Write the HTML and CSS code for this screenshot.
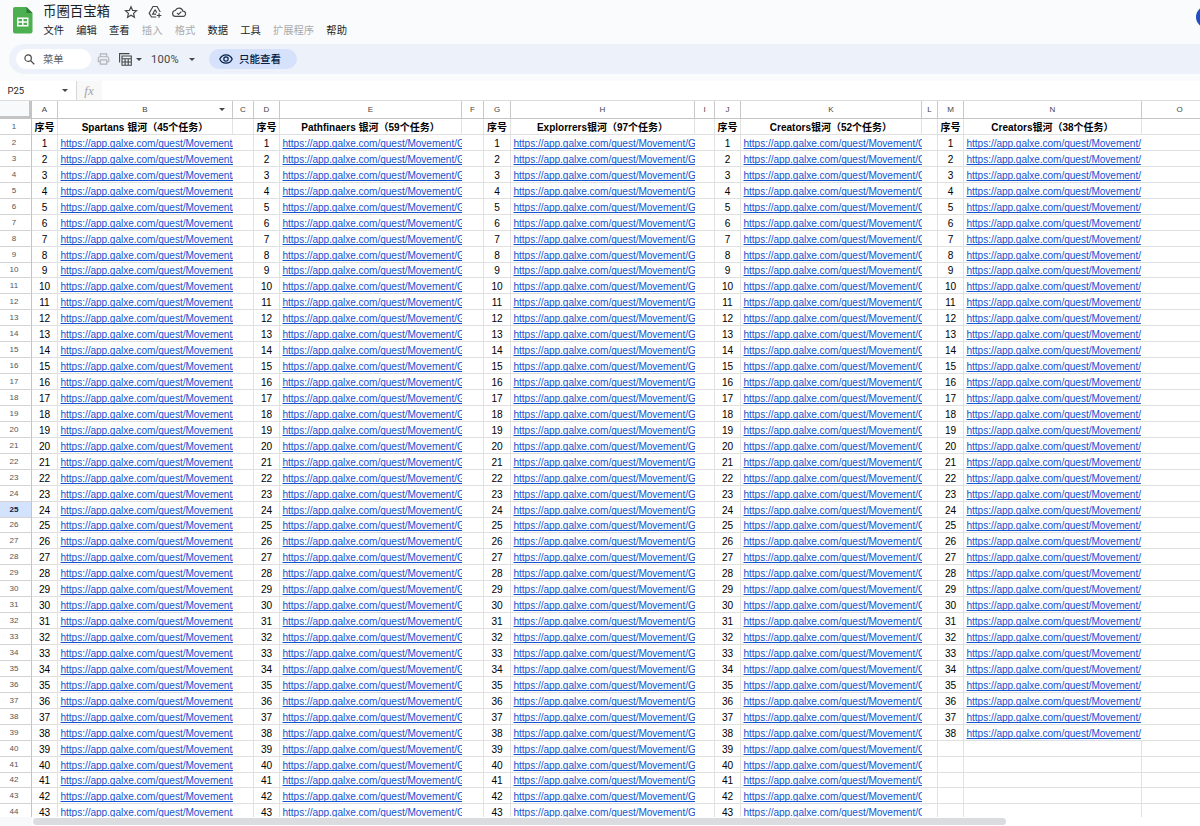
FILE: index.html
```html
<!DOCTYPE html>
<html lang="zh-CN">
<head>
  <meta charset="UTF-8" />
  <meta name="viewport" content="width=device-width, initial-scale=1.0"/>
  <title>币圈百宝箱</title>
  <link rel="stylesheet" href="styles.css">
</head>
<body>
  <header class="header">
    <svg class="logo" viewBox="0 0 20 27">
      <path d="M2 0h11.500l6 6v18.500a2 2 0 0 1-2 2h-15.500a2 2 0 0 1-2-2V2a2 2 0 0 1 2-2z" fill="#4caf50"/>
      <path d="M13.500 0l6 6h-6z" fill="#2e7d37"/>
      <path d="M4 10.500h11.500v9H4zM5.500 12v2.200h3.500V12zM10.500 12v2.200H14V12zM5.500 15.700v2.300h3.500v-2.300zM10.500 15.700v2.300H14v-2.300z" fill="#fff" fill-rule="evenodd"/>
    </svg>
    <div class="head-text">
      <div class="title-row">
        <h1 class="title">币圈百宝箱</h1>
        <svg class="title-icon" viewBox="0 0 24 24"><path d="M12 3l2.700 6.200 6.800.6-5.100 4.500 1.500 6.600L12 17.400 6.100 20.900l1.500-6.600L2.500 9.800l6.800-.6z"/></svg>
        <svg class="title-icon" viewBox="0 0 24 24"><path d="M14 20.500H6L2 14 8.500 2.500h7L21 12M12 8l-4 7.500h6M12 8l3 5M19 14v8M15 18h8"/></svg>
        <svg class="title-icon" viewBox="0 0 24 24"><path d="M6.500 19.500a5 5 0 0 1-.8-10A6.800 6.800 0 0 1 18.600 10.500a4.500 4.500 0 0 1 .4 9zM8.500 13.500l2.700 2.700 4.800-4.800"/></svg>
      </div>
      <nav class="menu">
        <span>文件</span><span>编辑</span><span>查看</span><span class="off">插入</span><span class="off">格式</span><span>数据</span><span>工具</span><span class="off">扩展程序</span><span>帮助</span>
      </nav>
    </div>
    <div class="avatar"></div>
  </header>

  <div class="toolbar">
    <div class="search">
      <svg class="icon-search" viewBox="0 0 12 12"><circle cx="4.500" cy="4.500" r="3.500"/><path d="M7.200 7.200l4 4"/></svg>
      <span>菜单</span>
    </div>
    <svg class="icon-print" viewBox="0 0 14 13"><path d="M3.500 4V1h7v3M3.500 9.500h-2.200V6a2 2 0 0 1 2-2h7.400a2 2 0 0 1 2 2v3.500h-2.200M3.500 7.500h7V12h-7z"/></svg>
    <svg class="icon-views" viewBox="0 0 13 13"><path d="M.6 9.500V.6h9.900M3 3h9.300v9.300H3zM3 5.800h9.300M3 9h9.300M6.100 5.800v6.500M9.200 5.800v6.500"/></svg>
    <i class="caret"></i>
    <span class="zoom">100%</span>
    <i class="caret"></i>
    <div class="view-only">
      <svg class="icon-eye" viewBox="0 0 14 10"><path d="M.8 5C2 2.300 4.300.8 7 .8S12 2.300 13.200 5C12 7.700 9.700 9.200 7 9.200S2 7.700.8 5z"/><circle cx="7" cy="5" r="2.200"/></svg>
      <span>只能查看</span>
    </div>
  </div>

  <div class="formula-bar">
    <span class="cell-name">P25</span>
    <i class="caret"></i>
    <span class="fx">fx</span>
  </div>

  <main class="sheet" id="sheet"></main>

  <footer class="scroll">
    <div class="scroll-corner"></div>
    <div class="scroll-thumb"></div>
  </footer>

  <script>
    const url = 'https://app.galxe.com/quest/Movement/';
    const letters = 'ABCDEFGHIJKLMNO'.split('');
    const groups = {
      A: { title: 'Spartans 银河（45个任务）', count: 45, path: '' },
      D: { title: 'Pathfinaers 银河（59个任务）', count: 59, path: 'G' },
      G: { title: 'Explorrers银河（97个任务）', count: 97, path: 'G' },
      J: { title: 'Creators银河（52个任务）', count: 52, path: 'G' },
      M: { title: 'Creators银河（38个任务）', count: 38, path: '' }
    };
    const activeRow = 25;
    const sheet = document.getElementById('sheet');

    let html = '<div class="row col-heads"><div class="corner"></div>';
    letters.forEach(l => {
      html += `<div class="col-head">${l}${l === 'B' ? '<i class="caret"></i>' : ''}</div>`;
    });
    html += '</div>';

    for (let r = 1; r <= 44; r++) {
      html += `<div class="row"><div class="row-head${r === activeRow ? ' active' : ''}">${r}</div>`;
      letters.forEach((l, i) => {
        const own = groups[l];
        const left = groups[letters[i - 1]];
        if (r === 1) {
          html += `<div class="cell bold">${own ? '序号' : left ? left.title : ''}</div>`;
        } else if (own && r - 1 <= own.count) {
          html += `<div class="cell num">${r - 1}</div>`;
        } else if (left && r - 1 <= left.count) {
          html += `<div class="cell link"><a>${url}${left.path}</a></div>`;
        } else {
          html += '<div class="cell"></div>';
        }
      });
      html += '</div>';
    }
    sheet.innerHTML = html;
  </script>
</body>
</html>
```

FILE: styles.css
```css
* {
  box-sizing: border-box;
}
body {
  margin: 0;
  height: 826px;
  overflow: hidden;
  display: flex;
  flex-direction: column;
  background: #f9fbfd;
  color: #1f1f1f;
  font-family: "Liberation Sans", "Noto Sans CJK SC", sans-serif;
}
svg {
  flex: none;
  fill: none;
  stroke: #444746;
}
.header {
  height: 44px;
  flex: none;
  display: flex;
  padding-left: 13px;
  overflow: hidden;
}
.logo {
  width: 20px;
  height: 27px;
  margin-top: 7px;
  stroke: none;
}
.head-text {
  margin-left: 10px;
}
.title-row {
  display: flex;
  align-items: center;
  height: 22px;
}
.title {
  margin: 0 9px 0 0;
  padding-top: 1px;
  font-size: 13.400px;
  font-weight: 400;
  line-height: 22px;
}
.title-icon {
  width: 14px;
  height: 14px;
  margin: 2px 5px 0;
  stroke-width: 2;
}
.menu {
  display: flex;
  gap: 12.200px;
  padding-left: 0.500px;
  font-size: 10.300px;
  line-height: 17px;
}
.off {
  color: #a9abae;
}
.avatar {
  flex: none;
  width: 22px;
  height: 22px;
  margin: 6px -18px 0 auto;
  border-radius: 50%;
  background: #1f4fc0;
}
.toolbar {
  flex: none;
  display: flex;
  align-items: center;
  height: 30px;
  margin-left: 9px;
  padding-left: 7px;
  border-radius: 15px 0 0 15px;
  background: #edf2fa;
}
.search {
  display: flex;
  align-items: center;
  gap: 8px;
  width: 75px;
  height: 20px;
  padding-left: 8px;
  border-radius: 10px;
  background: #fff;
  color: #5f6368;
  font-size: 10.300px;
}
.search span,
.view-only span {
  margin-top: -2px;
}
.icon-search {
  width: 11px;
  height: 11px;
  stroke-width: 1.300;
}
.icon-print {
  width: 13px;
  height: 12px;
  margin-left: 6px;
  stroke: #aeb1b5;
  stroke-width: 1.200;
}
.icon-views {
  width: 13px;
  height: 13px;
  margin: 0 4px 0 9px;
  stroke-width: 1.100;
}
.caret {
  flex: none;
  width: 0;
  height: 0;
  border: 3px solid transparent;
  border-top-color: #444746;
  border-bottom: 0;
}
.zoom {
  width: 28px;
  margin: 1px 10px 0 9px;
  color: #444746;
  font-family: Roboto, sans-serif;
  font-size: 11.200px;
  letter-spacing: 0.200px;
}
.view-only {
  display: flex;
  align-items: center;
  gap: 6px;
  width: 88px;
  height: 20px;
  margin-left: 14px;
  padding-left: 10px;
  border-radius: 10px;
  background: #d6e2fb;
  color: #041e49;
  font-size: 10.500px;
  font-weight: 500;
}
.icon-eye {
  width: 14px;
  height: 10px;
  stroke: #041e49;
  stroke-width: 1.200;
}
.formula-bar {
  flex: none;
  display: flex;
  align-items: center;
  height: 19px;
  margin-top: 7px;
  padding-left: 7.500px;
  background: #fff;
}
.cell-name {
  width: 54px;
  font-family: Roboto, sans-serif;
  font-size: 9.500px;
}
.fx {
  height: 19px;
  width: 26px;
  margin-left: 8px;
  border-left: 1px solid #d5d7da;
  background: #f8f8f8;
  color: #a5a5a5;
  font: italic 13px/19px "Liberation Serif", serif;
  text-align: center;
}

/* grid */
.sheet {
  flex: none;
  height: 717px;
  overflow: hidden;
  background: #fff;
  border-top: 1px solid #dcdcdc;
}
.row {
  display: grid;
  grid-template-columns: 32px 26px 175px 21px 26px 182px 22px 27px 184px 20px 26px 181px 16px 26px 178px 76px;
  height: 15.940px;
}
.row.col-heads {
  height: 18px;
}
.corner {
  border: solid #c4c4c4;
  border-width: 0 3px 3px 0;
  background: #f8f9fa;
}
.col-head {
  display: grid;
  place-items: center;
  position: relative;
  border-right: 1px solid #c9c9c9;
  border-bottom: 1px solid #c4c4c4;
  color: #444;
  font-size: 8px;
}
.col-head .caret {
  position: absolute;
  right: 7px;
  top: 7px;
}
.row-head {
  padding-right: 3px;
  border-right: 1px solid #c4c4c4;
  border-bottom: 1px solid #d4d4d4;
  color: #555;
  font-size: 8px;
  line-height: 15px;
  text-align: center;
}
.row-head.active {
  background: #d3e3fd;
  color: #041e49;
  font-weight: 700;
}
.cell {
  overflow: hidden;
  white-space: nowrap;
  border-right: 1px solid #e2e2e2;
  border-bottom: 1px solid #e0e0e0;
  color: #000;
  font-size: 10.120px;
  line-height: 18px;
  text-align: center;
}
.bold {
  font-size: 10px;
  font-weight: 700;
}
.link {
  padding-left: 2.500px;
  border-right: 0;
  letter-spacing: -0.055px;
  text-align: left;
}
.link a {
  color: #1453d0;
  text-decoration: underline;
  text-decoration-skip-ink: none;
}
.scroll {
  display: flex;
  height: 9px;
  background: #fff;
}
.scroll-corner {
  width: 32px;
  background: #f8f9fa;
}
.scroll-thumb {
  width: 973px;
  height: 7px;
  margin: 1px 0 0 1px;
  border-radius: 4px;
  background: #dadce0;
}
```
